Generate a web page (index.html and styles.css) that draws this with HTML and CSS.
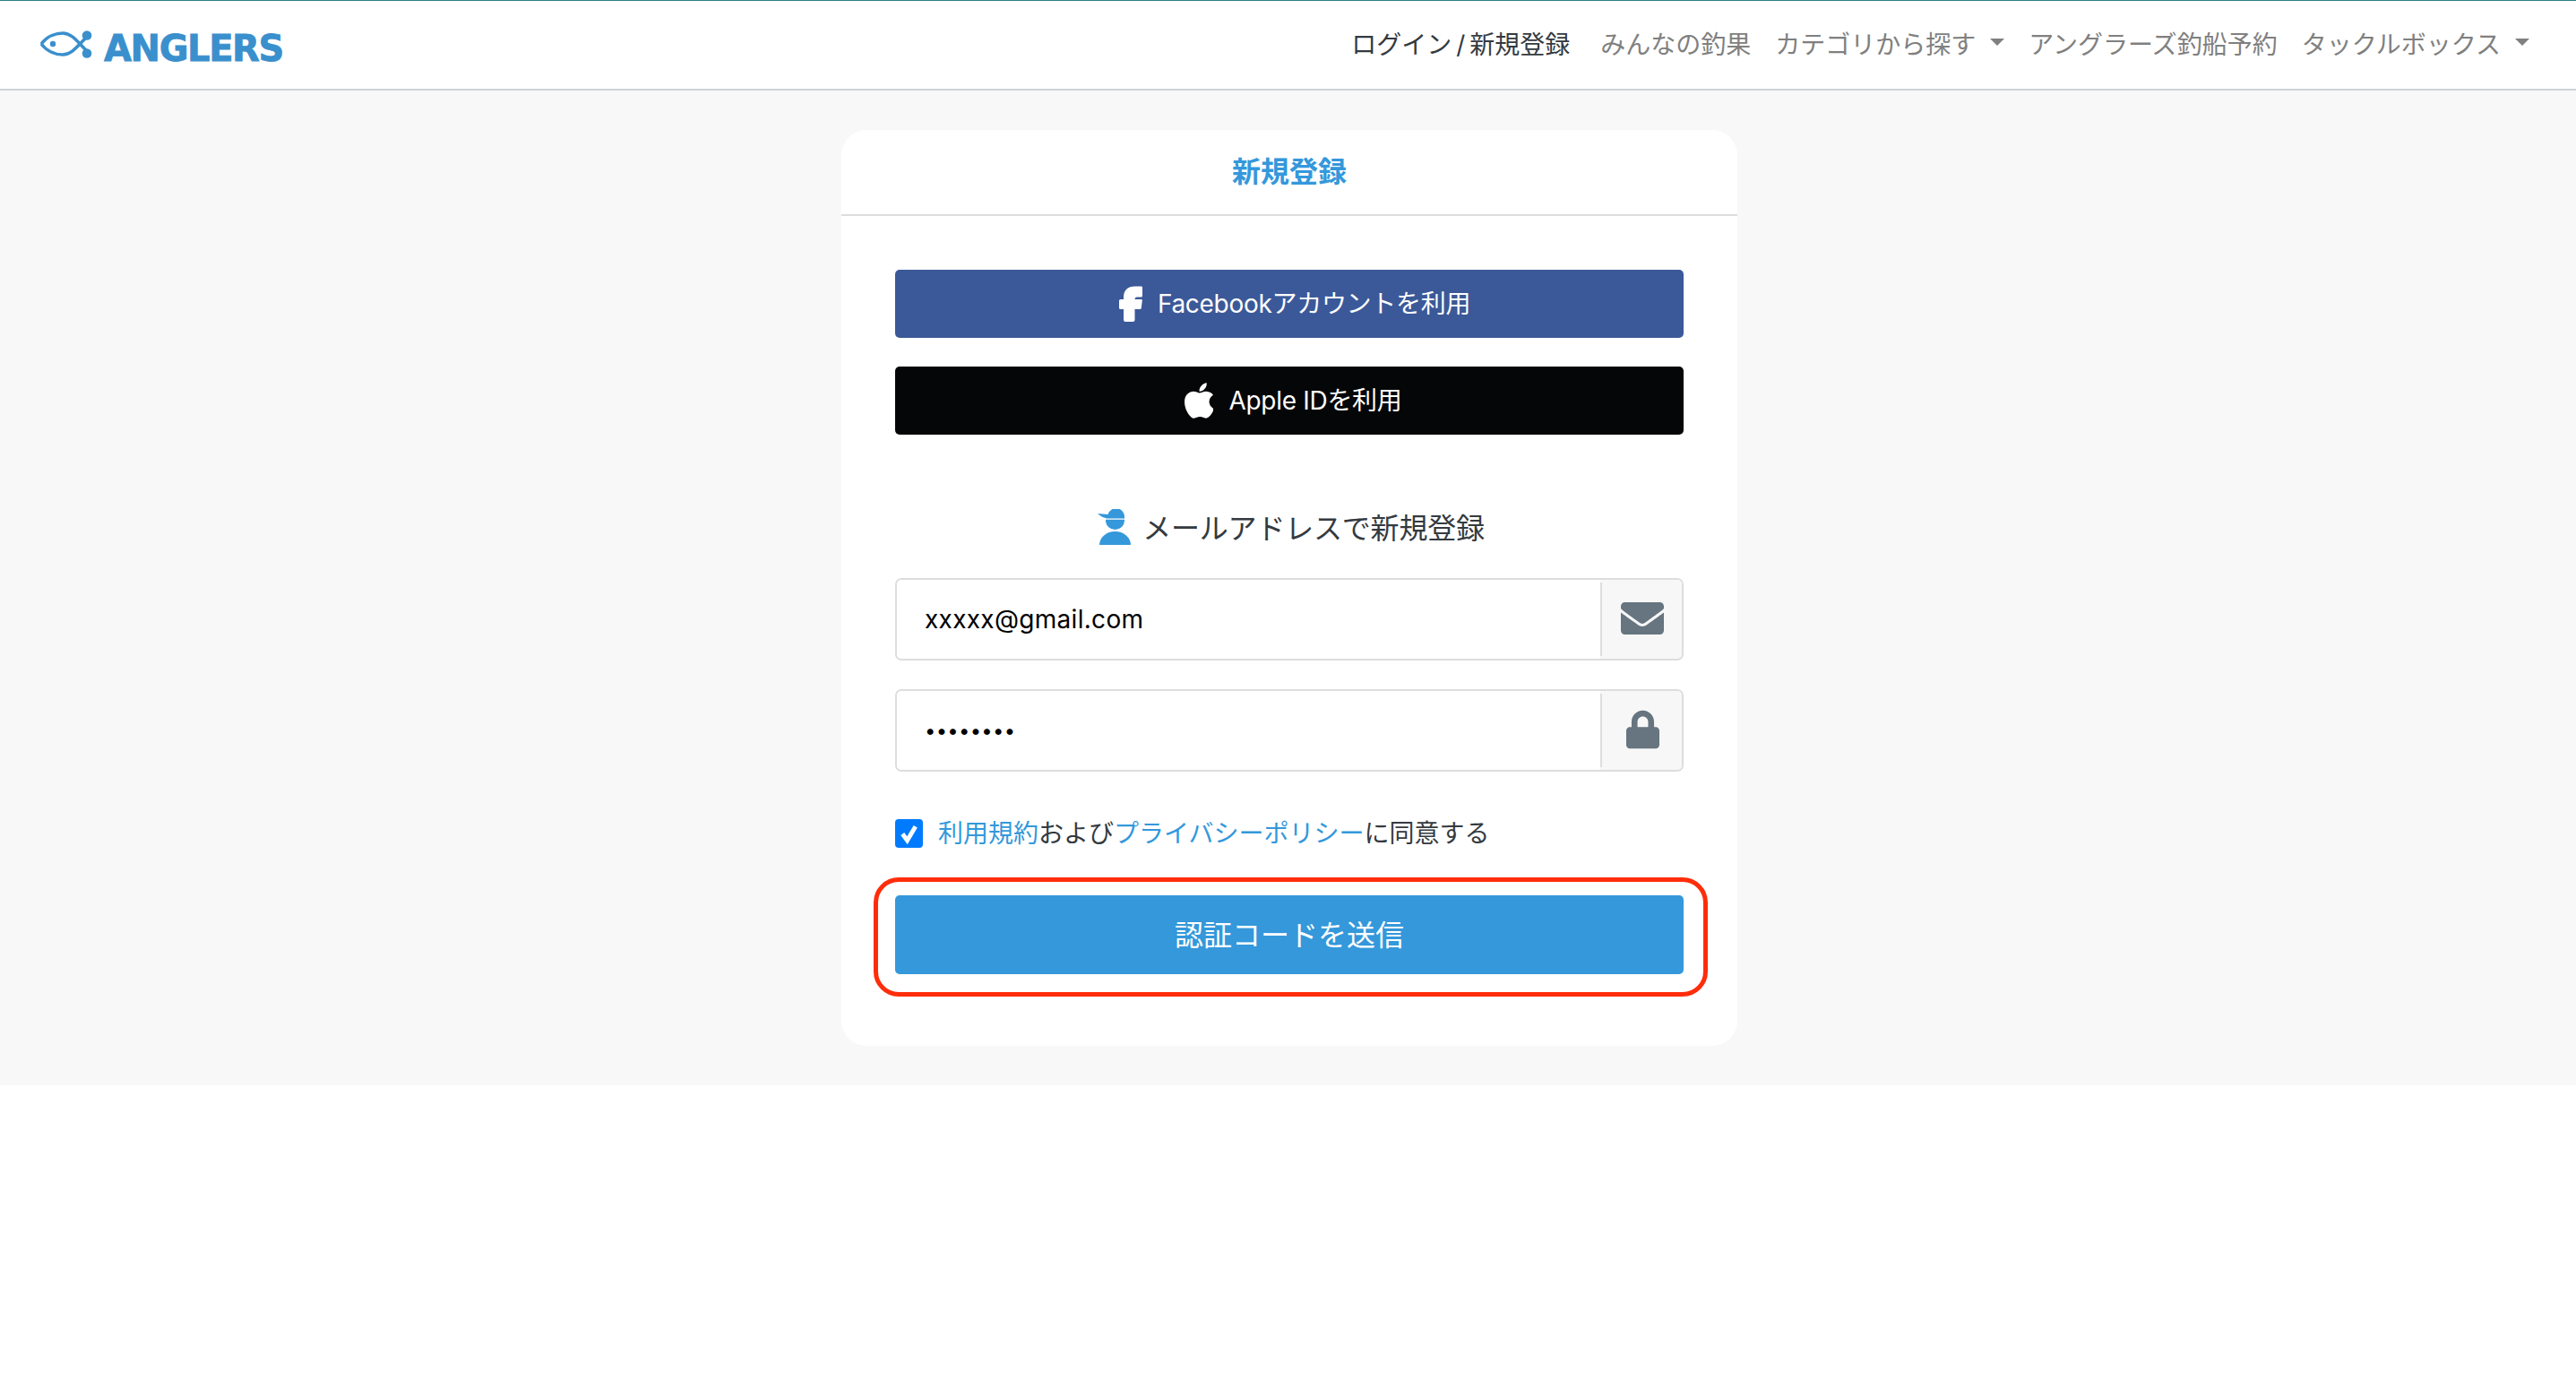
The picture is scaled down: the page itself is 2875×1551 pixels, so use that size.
FILE: index.html
```html
<!DOCTYPE html>
<html lang="ja">
  <head>
    <meta charset="UTF-8" />
    <meta name="viewport" content="width=device-width, initial-scale=1.0" />
    <title>新規登録 | ANGLERS</title>
    <link rel="stylesheet" href="styles.css">
  </head>

  <body>
    <header class="navbar">
      <a class="brand" href="#">
        <svg class="brand-mark" viewBox="0 0 60 34" aria-hidden="true">
          <path class="fish" d="M2 16 C9 7 19 4 26 4 C36 4 42 13 54 25" />
          <path class="fish" d="M2 16 C9 25 19 28 26 28 C36 28 42 19 54 7" />
          <circle cx="15" cy="16" r="3.2" />
          <circle cx="53" cy="6.5" r="5.3" />
          <circle cx="53" cy="26.5" r="5.3" />
        </svg>
        <span class="brand-name">ANGLERS</span>
      </a>
      <nav class="nav">
        <a class="nav-link nav-link-active" href="#">ログイン / 新規登録</a>
        <a class="nav-link" href="#">みんなの釣果</a>
        <a class="nav-link dropdown" href="#">カテゴリから探す</a>
        <a class="nav-link" href="#">アングラーズ釣船予約</a>
        <a class="nav-link dropdown" href="#">タックルボックス</a>
      </nav>
    </header>

    <main class="page">
      <section class="card">
        <h1 class="card-title">新規登録</h1>
        <div class="card-body">
          <a class="btn btn-facebook" href="#">
            <svg class="icon-facebook" viewBox="0 0 26 40" aria-hidden="true">
              <path d="M25 .5Q26 .5 26 2V11Q26 12.5 24.5 12.5H20Q17.5 12.5 17.5 15H25Q26 15 25.8 16.5L24.8 24.5Q24.6 26 23.5 26H17.5V38Q17.5 40 15.5 40H7Q5 40 5 38V26H1.5Q0 26 0 24.5V16.5Q0 15 1.5 15H5V13Q5 .5 18 .5Z" />
            </svg>
            Facebookアカウントを利用
          </a>
          <a class="btn btn-apple" href="#">
            <svg class="icon-apple" viewBox="4 32 365 448" aria-hidden="true">
              <path d="M318.7 268.7c-.2-36.7 16.4-64.4 50-84.8-18.8-26.9-47.2-41.7-84.7-44.6-35.5-2.8-74.3 20.7-88.5 20.7-15 0-49.4-19.7-76.4-19.7C63.3 141.2 4 184.8 4 273.5q0 39.3 14.4 81.2c12.8 36.7 59 126.7 107.2 125.2 25.2-.6 43-17.9 75.8-17.9 31.8 0 48.3 17.9 76.4 17.9 48.6-.7 90.4-82.5 102.6-119.3-65.2-30.7-61.7-90-61.7-91.9zm-56.6-164.2c27.3-32.4 24.8-61.9 24-72.5-24.1 1.4-52 16.4-67.9 34.9-17.5 19.8-27.8 44.3-25.6 71.9 26.1 2 49.9-11.4 69.5-34.3z" />
            </svg>
            Apple IDを利用
          </a>

          <h2 class="mail-title">
            <svg class="icon-user" viewBox="0 0 38 40" aria-hidden="true">
              <path d="M30 10.5V10A9.5 10 0 0 0 11.5 6L0 5C3 8 8 10.5 12 10.5Z" />
              <path d="M9 11.7H30V13A10.5 10 0 0 1 9 13Z" />
              <path d="M2 40A17.5 15 0 0 1 37 40Z" />
            </svg>
            メールアドレスで新規登録
          </h2>

          <div class="input-group">
            <input class="form-control" type="email" value="xxxxx@gmail.com" />
            <span class="addon">
              <svg class="icon-mail" viewBox="0 64 512 384" aria-hidden="true">
                <path d="M502.3 190.8c3.9-3.1 9.7-.2 9.7 4.7V400c0 26.5-21.5 48-48 48H48c-26.5 0-48-21.5-48-48V195.6c0-5 5.7-7.8 9.7-4.7 22.4 17.4 52.1 39.5 154.1 113.6 21.1 15.4 56.7 47.8 92.2 47.6 35.7.3 72-32.8 92.3-47.6 102-74.1 131.6-96.3 154-113.7zM256 320c23.2.4 56.6-29.2 73.4-41.4 132.7-96.3 142.8-104.7 173.4-128.7 5.8-4.5 9.2-11.5 9.2-18.9v-19c0-26.5-21.5-48-48-48H48C21.5 64 0 85.5 0 112v19c0 7.4 3.4 14.3 9.2 18.9 30.6 23.9 40.7 32.4 173.4 128.7 16.8 12.2 50.2 41.8 73.4 41.4z" />
              </svg>
            </span>
          </div>
          <div class="input-group">
            <input class="form-control" type="password" value="password" />
            <span class="addon">
              <svg class="icon-lock" viewBox="0 0 448 512" aria-hidden="true">
                <path d="M400 224h-24v-72C376 68.2 307.8 0 224 0S72 68.2 72 152v72H48c-26.5 0-48 21.5-48 48v192c0 26.5 21.5 48 48 48h352c26.5 0 48-21.5 48-48V272c0-26.5-21.5-48-48-48zm-104 0H152v-72c0-39.7 32.3-72 72-72s72 32.3 72 72v72z" />
              </svg>
            </span>
          </div>

          <label class="agree">
            <span class="checkbox">
              <svg viewBox="0 0 32 32" aria-hidden="true">
                <path d="M8.5 16.5L14 24L23.5 8" />
              </svg>
            </span>
            <span class="agree-text"><a href="#">利用規約</a>および<a href="#">プライバシーポリシー</a>に同意する</span>
          </label>

          <div class="submit-wrap">
            <button class="btn btn-submit" type="button">認証コードを送信</button>
            <span class="highlight"></span>
          </div>
        </div>
      </section>
    </main>
  </body>
</html>
```

FILE: styles.css
```css
* {
  margin: 0;
  padding: 0;
  box-sizing: border-box;
}

body {
  font-family: "Inter", "Noto Sans CJK JP", sans-serif;
  font-size: 28px;
  color: #343a40;
  background-color: #fff;
}

a {
  color: #3498db;
  text-decoration: none;
}

.navbar {
  display: flex;
  align-items: center;
  height: 101px;
  padding: 0 52px 0 44px;
  background-color: #fff;
  border-top: 1px solid #2f7f86;
  border-bottom: 2px solid #ced4da;
}

.brand {
  display: flex;
  align-items: center;
  gap: 12px;
  color: #3a8fcd;
}

.brand-mark {
  width: 60px;
  height: 34px;
  fill: #3a8fcd;
}

.fish {
  fill: none;
  stroke: #3a8fcd;
  stroke-width: 3.6;
}

.brand-name {
  margin-top: 8px;
  font-family: "DejaVu Sans", sans-serif;
  font-size: 40px;
  font-weight: 700;
  letter-spacing: -1.4px;
  line-height: 40px;
  -webkit-text-stroke: 0.8px #3a8fcd;
}

.nav {
  display: flex;
  align-items: center;
  gap: 27px;
  margin-left: auto;
  padding-bottom: 4px;
}

.nav-link {
  display: flex;
  align-items: center;
  color: #808080;
}

.nav-link-active {
  color: #343a40;
  margin-right: 7px;
  word-spacing: -3px;
}

.dropdown::after {
  content: "";
  margin-left: 16px;
  margin-top: -2px;
  border-top: 8px solid #808080;
  border-left: 8px solid transparent;
  border-right: 8px solid transparent;
}

.page {
  padding: 44px 0 44px 3px;
  background-color: #f8f8f8;
}

.card {
  width: 1000px;
  margin: 0 auto;
  background-color: #fff;
  border-radius: 28px;
}

.card-title {
  height: 96px;
  line-height: 94px;
  text-align: center;
  font-size: 32px;
  font-weight: 700;
  color: #3498db;
  border-bottom: 2px solid #ddd;
}

.card-body {
  padding: 60px 60px 80px;
}

.btn {
  display: flex;
  align-items: center;
  justify-content: center;
  width: 100%;
  border: 0;
  border-radius: 5px;
  color: #fff;
  font-family: inherit;
}

.btn-facebook,
.btn-apple {
  height: 76px;
  gap: 17px;
  padding-bottom: 4px;
  letter-spacing: -0.3px;
}

.btn-facebook {
  background-color: #3b5998;
  margin-bottom: 32px;
  padding-left: 12px;
}

.btn-apple {
  background-color: #050608;
  padding-left: 9px;
}

.icon-facebook {
  width: 26px;
  height: 40px;
  margin-top: 4px;
  fill: #fff;
}

.icon-apple {
  width: 32px;
  height: 40px;
  margin-top: 4px;
  fill: #fff;
}

.mail-title {
  display: flex;
  align-items: center;
  justify-content: center;
  gap: 12px;
  height: 60px;
  margin: 73px 0 27px;
  padding: 0 0 3px 4px;
  font-size: 32px;
  font-weight: 400;
  letter-spacing: -0.2px;
}

.icon-user {
  width: 38px;
  height: 40px;
  margin-top: 3px;
  fill: #3498db;
}

.input-group {
  display: flex;
  height: 92px;
  margin-bottom: 32px;
  border: 2px solid #ddd;
  border-radius: 7px;
  overflow: hidden;
}

.form-control {
  flex: 1;
  min-width: 0;
  padding: 0 31px;
  border: 0;
  outline: 0;
  font-family: inherit;
  font-size: 28px;
  letter-spacing: 0.3px;
  color: #000;
  background-color: #fff;
}

.form-control[type="password"] {
  font-size: 22px;
}

.addon {
  position: relative;
  display: flex;
  align-items: center;
  justify-content: center;
  width: 91px;
  padding: 0 0 2px 3px;
  background-color: #f7f7f7;
}

.addon::before {
  content: "";
  position: absolute;
  left: 0;
  top: 3px;
  bottom: 3px;
  width: 2px;
  background-color: #ddd;
}

.icon-mail {
  width: 48px;
  height: 38px;
  fill: #66757f;
}

.icon-lock {
  width: 37px;
  height: 44px;
  fill: #66757f;
}

.agree {
  display: flex;
  align-items: center;
  gap: 17px;
  height: 32px;
  margin-top: 53px;
}

.agree-text {
  padding-bottom: 4px;
}

.checkbox {
  width: 31px;
  height: 32px;
  border-radius: 4px;
  background-color: #007bff;
}

.checkbox svg {
  display: block;
  width: 31px;
  height: 32px;
  fill: none;
  stroke: #fff;
  stroke-width: 5;
}

.submit-wrap {
  position: relative;
  margin-top: 53px;
}

.btn-submit {
  height: 88px;
  padding-bottom: 4px;
  font-size: 32px;
  background-color: #3498db;
}

.highlight {
  position: absolute;
  top: -20px;
  right: -27px;
  bottom: -25px;
  left: -24px;
  border: 5px solid #ff2d0a;
  border-radius: 28px;
  pointer-events: none;
}
```
